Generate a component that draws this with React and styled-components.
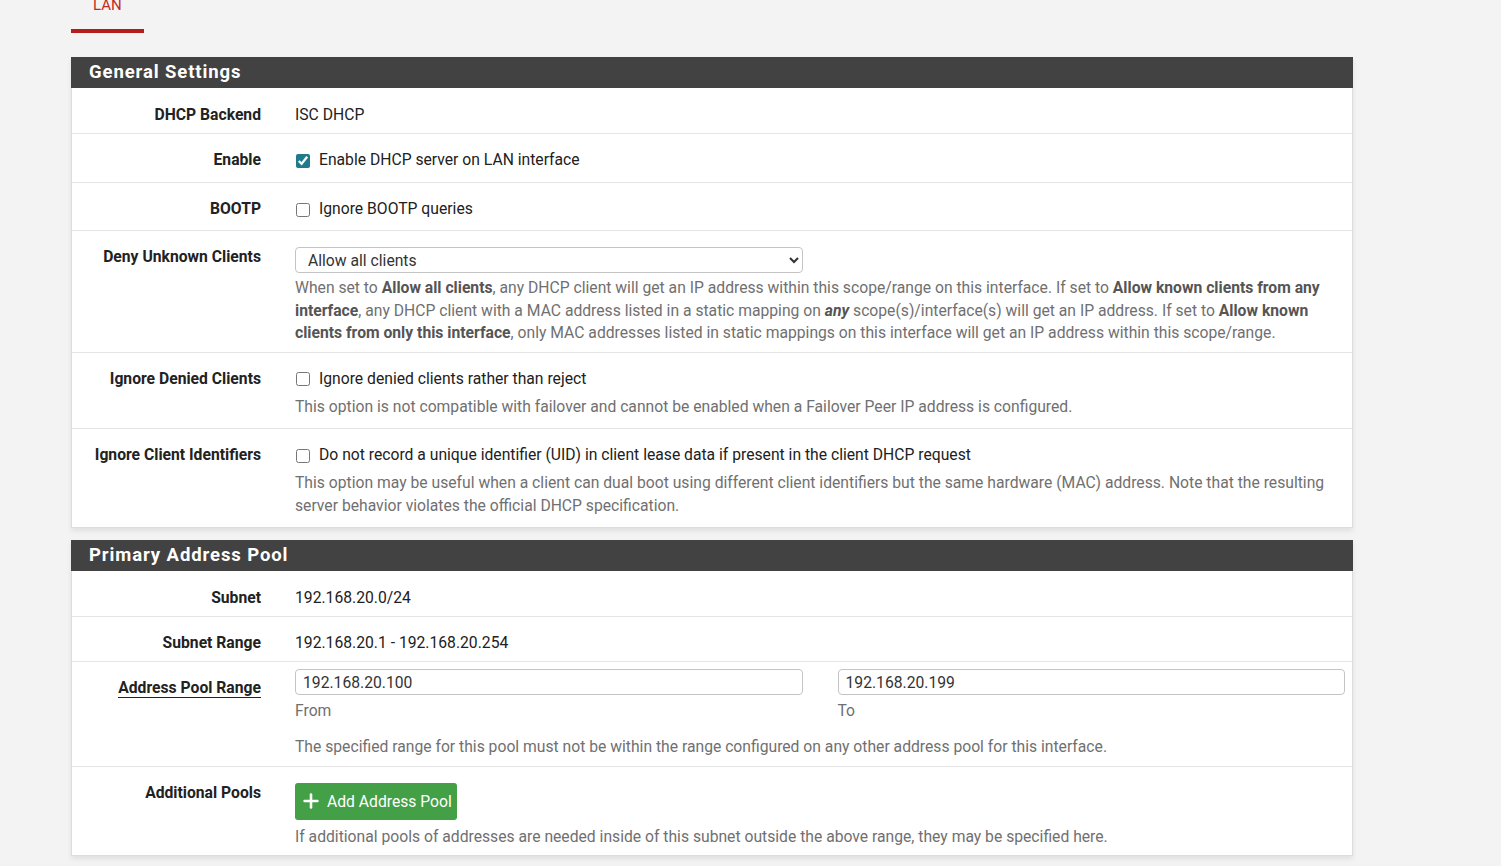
import React from "react";
import styled, { createGlobalStyle } from "styled-components";
import { Plus } from "lucide-react";

const GlobalStyle = createGlobalStyle`
  html, body {
    margin: 0;
    padding: 0;
    background: #f3f3f3;
    font-family: Roboto, "Liberation Sans", Arial, sans-serif;
    font-size: 15.7px;
    color: #212121;
  }
`;

const Page = styled.div`
  padding: 0 0 20px 71px;
  width: 1282px;
`;

const TabBar = styled.div`
  display: flex;
  margin-top: -6px;
  margin-bottom: 24px;
`;

const Tab = styled.div`
  padding: 0 22px 13px;
  line-height: 22px;
  font-size: 15px;
  color: #c62828;
  border-bottom: 4px solid #b71c1c;
`;

const Panel = styled.section`
  background: #fff;
  border: 1px solid #dcdcdc;
  border-top: none;
  box-shadow: 0 3px 5px rgba(0, 0, 0, 0.08);
  margin-bottom: 12px;
`;

const PanelHeader = styled.h2`
  margin: 0 -1px;
  height: 31px;
  line-height: 31px;
  padding: 0 18px;
  background: #424242;
  color: #fff;
  font-size: 18.5px;
  font-weight: 700;
  letter-spacing: 0.9px;
`;

const Row = styled.div`
  display: grid;
  grid-template-columns: 189px 1fr;
  column-gap: 34px;
  padding: 15px 7px 7px 0;
  border-top: 1px solid #e4e4e4;

  &:first-of-type {
    border-top: none;
    padding-top: 16px;
  }
`;

const Label = styled.div`
  text-align: right;
  font-weight: 700;
  line-height: 22px;
  color: #222;

  abbr {
    text-decoration: none;
    border-bottom: 1px solid #222;
    cursor: help;
  }
`;

const Value = styled.div`
  line-height: 22px;
  min-width: 0;
  margin-top: ${(p) => p.$shift || 0}px;
`;

const CheckLine = styled.label`
  display: flex;
  align-items: center;
  line-height: 22px;
  margin-bottom: ${(p) => (p.$last ? 3 : 4)}px;
  color: #212121;
`;

const Check = styled.input.attrs({ type: "checkbox" })`
  width: 14px;
  height: 14px;
  margin: 1px 9px 0 1px;
  accent-color: #1f7a8c;
`;

const Select = styled.select`
  display: block;
  width: 508px;
  height: 26px;
  margin-top: 1px;
  padding: 0 6px 0 8px;
  border: 1px solid #c4c4c4;
  border-radius: 4px;
  background: #fff;
  font-family: inherit;
  font-size: 15.7px;
  color: #333;
`;

const Help = styled.div`
  color: #707070;
  line-height: 22.5px;
  margin-top: ${(p) => (p.$afterCheck ? 6 : 4)}px;
  margin-bottom: ${(p) => (p.$afterCheck ? 3 : 0)}px;

  strong {
    color: #555;
  }
`;

const RangeGrid = styled.div`
  display: grid;
  grid-template-columns: 1fr 1fr;
  column-gap: 35px;
`;

const TextInput = styled.input`
  display: block;
  box-sizing: border-box;
  width: 100%;
  height: 26px;
  padding: 0 7px;
  border: 1px solid #c4c4c4;
  border-radius: 4px;
  font-family: inherit;
  font-size: 15.7px;
  color: #333;
`;

const Caption = styled.div`
  color: #707070;
  line-height: 22px;
  margin-top: 5px;
`;

const RangeHelp = styled(Help)`
  margin-top: 14px;
`;

const AddButton = styled.button`
  display: inline-flex;
  align-items: center;
  gap: 5px;
  height: 37px;
  margin-top: 1px;
  padding: 0 5px 0 5px;
  border: none;
  border-radius: 3px;
  background: #43a047;
  color: #fff;
  font-family: inherit;
  font-size: 15.7px;
  cursor: pointer;
`;

const ButtonHelp = styled(Help)`
  margin-top: 6px;
`;

export default function App() {
  return (
    <>
      <GlobalStyle />
      <Page>
        <TabBar>
          <Tab>LAN</Tab>
        </TabBar>

        <Panel>
          <PanelHeader>General Settings</PanelHeader>
          <Row>
            <Label>DHCP Backend</Label>
            <Value>ISC DHCP</Value>
          </Row>
          <Row>
            <Label>Enable</Label>
            <Value>
              <CheckLine>
                <Check defaultChecked />
                Enable DHCP server on LAN interface
              </CheckLine>
            </Value>
          </Row>
          <Row>
            <Label>BOOTP</Label>
            <Value>
              <CheckLine $last>
                <Check />
                Ignore BOOTP queries
              </CheckLine>
            </Value>
          </Row>
          <Row>
            <Label>Deny Unknown Clients</Label>
            <Value>
              <Select defaultValue="allow">
                <option value="allow">Allow all clients</option>
                <option value="any">Allow known clients from any interface</option>
                <option value="this">Allow known clients from only this interface</option>
              </Select>
              <Help>
                When set to <strong>Allow all clients</strong>, any DHCP client will get an IP
                address within this scope/range on this interface. If set to{" "}
                <strong>Allow known clients from any interface</strong>, any DHCP client with a
                MAC address listed in a static mapping on{" "}
                <strong>
                  <em>any</em>
                </strong>{" "}
                scope(s)/interface(s) will get an IP address. If set to{" "}
                <strong>Allow known clients from only this interface</strong>, only MAC addresses
                listed in static mappings on this interface will get an IP address within this
                scope/range.
              </Help>
            </Value>
          </Row>
          <Row>
            <Label>Ignore Denied Clients</Label>
            <Value>
              <CheckLine>
                <Check />
                Ignore denied clients rather than reject
              </CheckLine>
              <Help $afterCheck>
                This option is not compatible with failover and cannot be enabled when a Failover
                Peer IP address is configured.
              </Help>
            </Value>
          </Row>
          <Row>
            <Label>Ignore Client Identifiers</Label>
            <Value>
              <CheckLine>
                <Check />
                Do not record a unique identifier (UID) in client lease data if present in the
                client DHCP request
              </CheckLine>
              <Help $afterCheck>
                This option may be useful when a client can dual boot using different client
                identifiers but the same hardware (MAC) address. Note that the resulting server
                behavior violates the official DHCP specification.
              </Help>
            </Value>
          </Row>
        </Panel>

        <Panel>
          <PanelHeader>Primary Address Pool</PanelHeader>
          <Row>
            <Label>Subnet</Label>
            <Value>192.168.20.0/24</Value>
          </Row>
          <Row>
            <Label>Subnet Range</Label>
            <Value>192.168.20.1 - 192.168.20.254</Value>
          </Row>
          <Row>
            <Label>
              <abbr title="The range of addresses handed out by this pool">Address Pool Range</abbr>
            </Label>
            <Value $shift={-8}>
              <RangeGrid>
                <div>
                  <TextInput defaultValue="192.168.20.100" />
                  <Caption>From</Caption>
                </div>
                <div>
                  <TextInput defaultValue="192.168.20.199" />
                  <Caption>To</Caption>
                </div>
              </RangeGrid>
              <RangeHelp>
                The specified range for this pool must not be within the range configured on any
                other address pool for this interface.
              </RangeHelp>
            </Value>
          </Row>
          <Row>
            <Label>Additional Pools</Label>
            <Value>
              <AddButton type="button">
                <Plus size={22} strokeWidth={2.8} />
                Add Address Pool
              </AddButton>
              <ButtonHelp>
                If additional pools of addresses are needed inside of this subnet outside the above
                range, they may be specified here.
              </ButtonHelp>
            </Value>
          </Row>
        </Panel>
      </Page>
    </>
  );
}
